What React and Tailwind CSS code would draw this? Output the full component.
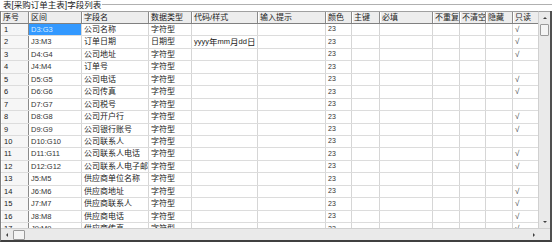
import React from "react";

const cols = [28, 53, 67, 43, 66, 68, 26, 28, 53, 27, 26, 27, 27];
const headers = ["序号", "区间", "字段名", "数据类型", "代码/样式", "输入提示", "颜色", "主键", "必填", "不重复", "不清空", "隐藏", "只读"];
const rowHeights = [12, 13, 12, 13, 12, 13, 12, 13, 12, 12, 13, 12, 13, 12, 13, 12, 13];

const rows = [
  ["1", "D3:G3", "公司名称", "字符型", "", "23", true],
  ["2", "J3:M3", "订单日期", "日期型", "yyyy年mm月dd日", "23", true],
  ["3", "D4:G4", "公司地址", "字符型", "", "23", true],
  ["4", "J4:M4", "订单号", "字符型", "", "23", false],
  ["5", "D5:G5", "公司电话", "字符型", "", "23", true],
  ["6", "D6:G6", "公司传真", "字符型", "", "23", true],
  ["7", "D7:G7", "公司税号", "字符型", "", "23", false],
  ["8", "D8:G8", "公司开户行", "字符型", "", "23", true],
  ["9", "D9:G9", "公司银行账号", "字符型", "", "23", true],
  ["10", "D10:G10", "公司联系人", "字符型", "", "23", false],
  ["11", "D11:G11", "公司联系人电话", "字符型", "", "23", true],
  ["12", "D12:G12", "公司联系人电子邮件", "字符型", "", "23", true],
  ["13", "J5:M5", "供应商单位名称", "字符型", "", "23", false],
  ["14", "J6:M6", "供应商地址", "字符型", "", "23", true],
  ["15", "J7:M7", "供应商联系人", "字符型", "", "23", true],
  ["16", "J8:M8", "供应商电话", "字符型", "", "23", true],
  ["17", "J9:M9", "供应商传真", "字符型", "", "23", true],
];

function Mixed({ text }) {
  const parts = text.split(/([\u4e00-\u9fff]+)/).filter(Boolean);
  return (
    <>
      {parts.map((p, i) =>
        /[\u4e00-\u9fff]/.test(p) ? (
          <span key={i} className="text-[8.5px]">{p}</span>
        ) : (
          <span key={i} className="text-[7.5px]">{p}</span>
        )
      )}
    </>
  );
}

function Cell({ w, children, className = "" }) {
  return (
    <div
      style={{ width: w }}
      className={"shrink-0 h-full border-r border-[#d6d6d6] overflow-hidden whitespace-nowrap flex items-center pl-[2px] " + className}
    >
      {children}
    </div>
  );
}

function Arrow({ dir }) {
  const d = {
    up: "M2 5 L4 3 L6 5 Z",
    down: "M2 3 L4 5 L6 3 Z",
    left: "M5 2 L3 4 L5 6 Z",
    right: "M3 2 L5 4 L3 6 Z",
  }[dir];
  return (
    <svg width="8" height="8" viewBox="0 0 8 8">
      <path d={d} fill="#404040" />
    </svg>
  );
}

export default function App() {
  return (
    <div
      className="w-[552px] h-[242px] bg-white flex flex-col overflow-hidden text-[#1a1a1a]"
      style={{ fontFamily: '"Liberation Sans", "Noto Sans CJK SC", sans-serif' }}
    >
      {/* group caption */}
      <div className="h-[11px] flex items-center relative shrink-0">
        <div className="absolute left-0 right-0 top-[4px] border-t border-[#b0b0b0] border-b border-b-white h-[2px]" />
        <span className="relative bg-white pl-[3px] pr-[1px] text-[8.5px] leading-[11px]">表[采购订单主表]字段列表</span>
      </div>

      <div className="flex-1 flex flex-col border-l border-[#808080] border-r-2 border-r-[#505050] border-b-2 border-b-[#404040] min-h-0">
        <div className="flex-1 flex min-h-0">
          {/* table */}
          <div className="w-[539px] flex flex-col overflow-hidden">
            <div className="h-[13px] shrink-0 flex bg-[#ededed] border-t border-[#a0a0a0] border-b border-b-[#808080]">
              {headers.map((h, i) => (
                <div
                  key={i}
                  style={{ width: cols[i] }}
                  className="shrink-0 h-full border-r border-[#8a8a8a] border-l border-l-white flex items-center pl-[1px] text-[8px] leading-none whitespace-nowrap overflow-hidden"
                >
                  {h}
                </div>
              ))}
            </div>
            {rows.map((r, ri) => (
              <div
                key={ri}
                style={{ height: rowHeights[ri] }}
                className="shrink-0 flex border-b border-[#dcdcdc]"
              >
                <Cell w={cols[0]} className="bg-[#f6f6f6] border-r-[#8a8a8a] border-l border-l-white text-[7.5px]">
                  {r[0]}
                </Cell>
                <Cell
                  w={cols[1]}
                  className={ri === 0 ? "bg-[#3399ff] text-[#d8ecff] text-[7.5px]" : "text-[7.5px] text-[#333]"}
                >
                  {r[1]}
                </Cell>
                <Cell w={cols[2]} className="text-[8px]">{r[2]}</Cell>
                <Cell w={cols[3]} className="text-[8px]">{r[3]}</Cell>
                <Cell w={cols[4]}><Mixed text={r[4]} /></Cell>
                <Cell w={cols[5]} />
                <Cell w={cols[6]} className="text-[7px] text-[#333]">{r[5]}</Cell>
                <Cell w={cols[7]} />
                <Cell w={cols[8]} />
                <Cell w={cols[9]} />
                <Cell w={cols[10]} />
                <Cell w={cols[11]} />
                <Cell w={cols[12]} className="text-[8px] text-[#444]">{r[6] ? "√" : ""}</Cell>
              </div>
            ))}
          </div>
          {/* vertical scrollbar */}
          <div className="w-[12px] flex flex-col bg-[#eaeaea] border-l border-[#d0d0d0] border-t border-t-[#a0a0a0]">
            <div className="h-[12px] flex items-center justify-center"><Arrow dir="up" /></div>
            <div className="h-[12px] mx-[1px] bg-[#f4f4f4] border border-[#9a9a9a] rounded-[1px]" />
            <div className="flex-1" />
            <div className="h-[12px] flex items-center justify-center"><Arrow dir="down" /></div>
          </div>
        </div>
        {/* horizontal scrollbar */}
        <div className="h-[12px] shrink-0 flex bg-[#eaeaea] border-t border-[#d0d0d0]">
          <div className="w-[539px] flex items-center">
            <div className="w-[12px] h-full flex items-center justify-center"><Arrow dir="left" /></div>
            <div className="w-[12px] h-[10px] bg-[#f4f4f4] border border-[#9a9a9a] rounded-[1px]" />
            <div className="flex-1" />
            <div className="w-[12px] h-full flex items-center justify-center"><Arrow dir="right" /></div>
          </div>
          <div className="flex-1 bg-[#eaeaea]" />
        </div>
      </div>
    </div>
  );
}
